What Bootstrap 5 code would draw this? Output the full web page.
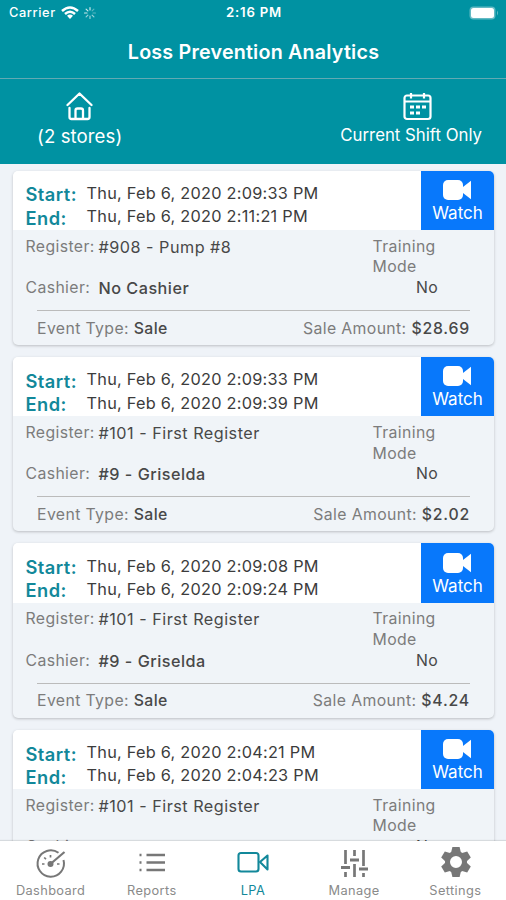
<!DOCTYPE html>
<html lang="en">
<head>
<meta charset="utf-8">
<meta name="viewport" content="width=device-width, initial-scale=1">
<title>Loss Prevention Analytics</title>
<link rel="stylesheet" href="https://cdn.jsdelivr.net/npm/bootstrap@5.3.0/dist/css/bootstrap.min.css">
<style>
  body { font-family: Inter, "Liberation Sans", sans-serif; background: #eff3f8; color: #484848; height: 900px; }
  svg { display: block; }
  .teal { background: #0092a2; }
  .status { height: 26px; padding: 0 7px 0 9px; font-size: 12.8px; font-weight: 500; letter-spacing: .6px; }
  .status .clock { font-weight: 600; font-size: 13.2px; letter-spacing: .8px; }
  .status .wifi { margin-left: 5px; }
  .title-bar { height: 53px; border-bottom: 1px solid #62aab3; font-size: 19.7px; letter-spacing: .2px; padding-top: 1px; padding-left: 1px; }
  .filters { height: 85px; padding: 13px 24px 0 37px; font-size: 16.8px; line-height: 24px; }
  .filters svg { margin-bottom: 2px; }
  .filters .stores { font-size: 18.6px; letter-spacing: .1px; padding-top: 1px; }
  .filters .calendar { margin-left: 13px; }
  .events { padding: 6.500px 12px 0 12.5px; gap: 11.9px; }
  .event { height: 174.5px; border-radius: 5px; background: #f0f4f8; box-shadow: 0 1px 3px rgba(0,0,0,.22); overflow: hidden; font-size: 15.8px; line-height: 20.7px; letter-spacing: .38px; }
  .event-head { height: 59.500px; }
  .times { padding: 11.500px 0 0 13px; line-height: 23px; font-size: 16.3px; letter-spacing: .25px; }
  .times dt { width: 61px; height: 23.3px; color: #12889a; font-weight: 600; font-size: 18.3px; letter-spacing: .45px; padding-top: 1.4px; }
  .times dd { height: 23.3px; color: #3c3c3c; }
  .watch { width: 73px; background: #0878fb; padding-top: 8.500px; font-size: 17px; line-height: 24px; letter-spacing: 0; }
  .grey { color: #7c7c7c; }
  .fw-medium { font-weight: 500; }
  .details { padding: 6.500px 0 0 13px; height: 80px; }
  .details .left-col { width: 347px; }
  .details .row-line { height: 41.4px; }
  .details .lab { width: 73px; }
  .details .answer { padding-left: 43.500px; }
  .val { font-size: 16.2px; letter-spacing: .5px; }
  .totals { margin: 0 24px 0 24.5px; border-top: 1px solid #bbb; padding-top: 7.500px; }
  .totals .amount { letter-spacing: .8px; }
  .tabs { height: 59px; box-shadow: 0 -1px 1px rgba(0,0,0,.1); color: #777; font-size: 12.8px; line-height: 16px; letter-spacing: .38px; }
  .tabs svg { height: 34px; margin-bottom: 3px; }
  .tabs .tab { width: 101.2px; padding-top: 5px; }
  .tabs .tab span { color: #8a8a8a; }
  .tabs .tab.on, .tabs .tab.on span { color: #12889a; }
</style>
</head>
<body class="d-flex flex-column overflow-hidden">
<svg class="d-none">
  <symbol id="cam" viewBox="0 0 29 22"><rect x="0" y="1" width="20" height="20" rx="5"/><path d="M18 9.500 28 1.800V20.200L18 12.500Z"/></symbol>
</svg>
<header class="teal text-white flex-shrink-0">
  <div class="status d-flex align-items-center">
    <div class="col d-flex align-items-center">
      <span>Carrier</span>
      <svg class="wifi" width="18" height="14" viewBox="0 0 18 14" fill="none" stroke="#fff" stroke-width="2.500"><path d="M1 5Q9-2 17 5M4 8Q9 3.500 14 8"/><path d="M6 9.700Q9 7.500 12 9.700L9 13Z" fill="#fff" stroke="none"/></svg>
      <svg class="ms-1" width="14" height="14" viewBox="-7 -7 14 14" stroke="#fff" stroke-width="1.200" stroke-linecap="round"><path d="M0-3V-5.500M-2.100-2.100-3.900-3.900M-3 0H-5.500" opacity=".8"/><path d="M-2.100 2.100-3.900 3.900M0 3V5.500M2.100 2.100 3.900 3.900" opacity=".6"/><path d="M3 0H5.500M2.100-2.100 3.900-3.900" opacity=".35"/></svg>
    </div>
    <span class="clock">2:16 PM</span>
    <div class="col d-flex justify-content-end">
      <svg width="30" height="14" viewBox="0 0 30 14"><rect x=".5" y=".5" width="26" height="13" rx="4" fill="#63bac4"/><rect x="2" y="2" width="23" height="10" rx="2.500" fill="#fff"/><path d="M28 4.500Q30 7 28 9.500Z" fill="#63bac4"/></svg>
    </div>
  </div>
  <h1 class="title-bar m-0 d-flex align-items-center justify-content-center fw-semibold">Loss Prevention Analytics</h1>
  <div class="filters d-flex justify-content-between">
    <div class="d-flex flex-column align-items-center">
      <svg width="28" height="29" viewBox="0 0 28 29" fill="none" stroke="#fff" stroke-width="2.300" stroke-linecap="round" stroke-linejoin="round"><path d="M1.500 13 13.500 1.500 25.500 13M3.500 16V25Q3.500 27 5.500 27H21.500Q23.500 27 23.500 25V16M9.500 26.500V18.500Q9.500 16.500 11.500 16.500H15Q17 16.500 17 18.500V26.500"/></svg>
      <span class="stores">(2 stores)</span>
    </div>
    <div class="d-flex flex-column align-items-center">
      <svg class="calendar" width="29" height="29" viewBox="0 0 29 29" fill="none" stroke="#fff" stroke-width="2.200"><rect x="1.500" y="3.500" width="26" height="23.500" rx="2.500"/><path d="M2 9.500H27M8 1V6.500M21 1V6.500"/><path stroke-width="2.800" d="M7 15H11M13 15H17M19 15H23M7 21H11M13 21H17"/></svg>
      <span>Current Shift Only</span>
    </div>
  </div>
</header>

<main class="events d-flex flex-column flex-grow-1 overflow-hidden" id="events"></main>

<nav class="tabs bg-white d-flex flex-shrink-0 position-relative">
  <div class="tab d-flex flex-column align-items-center">
    <svg width="34" height="34" viewBox="0 0 34 34" fill="none" stroke="currentColor" stroke-width="2"><path d="M24.500 6.800A13.200 13.200 0 1 0 29.500 14"/><path d="M17 17.500 30.500 6" stroke-width="2.200"/><circle cx="16.500" cy="18" r="3" fill="currentColor" stroke="none"/><path d="M8 18H10.500M23 18H25.500M16.500 9V11.500M10.200 11.500 12 13.200" stroke-width="1.700"/></svg>
    <span>Dashboard</span>
  </div>
  <div class="tab d-flex flex-column align-items-center">
    <svg width="34" height="34" viewBox="0 0 34 34" stroke="currentColor" stroke-width="2.300"><path d="M11.500 9H30M11.500 16.500H30M11.500 24H30M4.500 9H6.500M4.500 16.500H6.500M4.500 24H6.500"/></svg>
    <span>Reports</span>
  </div>
  <div class="tab on d-flex flex-column align-items-center">
    <svg width="34" height="34" viewBox="0 0 34 34" fill="none" stroke="currentColor" stroke-width="2.100" stroke-linejoin="round"><rect x="2.500" y="7" width="20" height="18.500" rx="2.500"/><path d="M24 16 31.500 9.500V23.500Z"/></svg>
    <span>LPA</span>
  </div>
  <div class="tab d-flex flex-column align-items-center">
    <svg width="34" height="34" viewBox="0 0 34 34" stroke="currentColor" stroke-width="2.700"><path d="M8.500 4V18M8.500 26V31M17.500 4V10M17.500 18V31M26.500 4V20M26.500 27V31"/><path d="M4 21.500H13M13 14H22M22 23H31" stroke-width="3"/></svg>
    <span>Manage</span>
  </div>
  <div class="tab d-flex flex-column align-items-center">
    <svg width="34" height="34" viewBox="-18 -16 34 34" fill="none" stroke="currentColor"><circle r="8.500" stroke-width="5"/><g fill="currentColor" stroke="none"><path id="tooth" d="M-5-9 -3.600-15H3.600L5-9Z"/><use href="#tooth" transform="rotate(60)"/><use href="#tooth" transform="rotate(120)"/><use href="#tooth" transform="rotate(180)"/><use href="#tooth" transform="rotate(240)"/><use href="#tooth" transform="rotate(300)"/></g></svg>
    <span>Settings</span>
  </div>
</nav>

<script src="https://cdn.jsdelivr.net/npm/bootstrap@5.3.0/dist/js/bootstrap.bundle.min.js"></script>
<script>
  const events = [
    ["2:09:33", "2:11:21", "#908 - Pump #8", "No Cashier", "$28.69"],
    ["2:09:33", "2:09:39", "#101 - First Register", "#9 - Griselda", "$2.02"],
    ["2:09:08", "2:09:24", "#101 - First Register", "#9 - Griselda", "$4.24"],
    ["2:04:21", "2:04:23", "#101 - First Register", "#9 - Griselda"]
  ];
  document.getElementById("events").innerHTML = events.map(([start, end, register, cashier, amount]) => `
    <article class="event flex-shrink-0">
      <div class="event-head bg-white d-flex justify-content-between">
        <dl class="times m-0">
          <div class="d-flex"><dt>Start:</dt><dd class="m-0">Thu, Feb 6, 2020 ${start} PM</dd></div>
          <div class="d-flex"><dt>End:</dt><dd class="m-0">Thu, Feb 6, 2020 ${end} PM</dd></div>
        </dl>
        <div class="watch text-white d-flex flex-column align-items-center">
          <svg width="29" height="22" fill="#fff"><use href="#cam"/></svg>
          <span>Watch</span>
        </div>
      </div>
      <div class="details d-flex">
        <div class="left-col">
          <div class="row-line d-flex"><span class="grey lab">Register:</span><span class="val">${register}</span></div>
          <div class="d-flex"><span class="grey lab">Cashier:</span><span class="val fw-medium">${cashier}</span></div>
        </div>
        <div>
          <div class="grey">Training<br>Mode</div>
          <div class="answer">No</div>
        </div>
      </div>
      ${amount ? `<div class="totals d-flex justify-content-between text-nowrap">
        <span><span class="grey">Event Type:</span> <span class="fw-medium">Sale</span></span>
        <span><span class="grey">Sale Amount:</span> <span class="amount fw-medium">${amount}</span></span>
      </div>` : ""}
    </article>`).join("");
</script>
</body>
</html>
